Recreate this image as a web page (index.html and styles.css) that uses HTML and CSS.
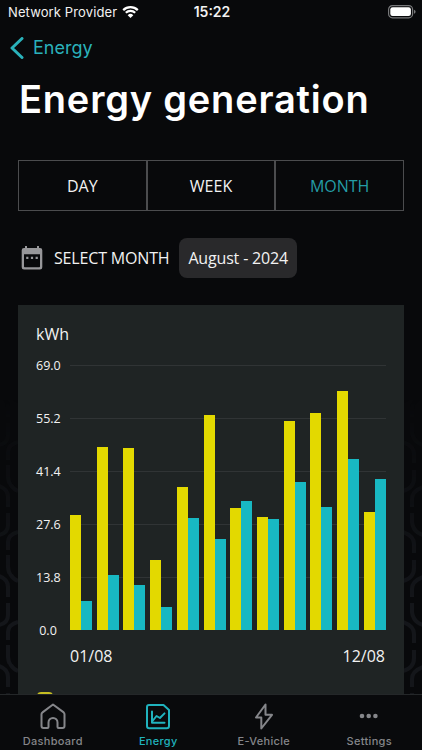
FILE: index.html
```html
<!DOCTYPE html>
<html lang="en">
<head>
    <meta charset="UTF-8">
    <title>Energy generation</title>
    <meta name="viewport" content="width=device-width, initial-scale=1.0">
    <link rel="stylesheet" href="styles.css">
</head>
<body>
    <svg class="pattern" width="422" height="750" viewBox="0 0 422 750">
        <defs>
            <pattern id="chain-left" x="0" y="484" width="18" height="90" patternUnits="userSpaceOnUse">
                <path d="M-1 2Q8 5 8 13V23M8 29V41Q8 49 -1 51M18 48Q8 51 8 58V66M8 71V83Q9 94 18 97M8 -7Q10 4 18 7"/>
            </pattern>
            <pattern id="chain-right" x="404" y="530" width="18" height="90" patternUnits="userSpaceOnUse">
                <path d="M-1 2Q10 6 10 14V23M10 30V38Q10 48 -1 51M19 47Q8 51 8 59V67M8 73V82Q9 92 19 95M8 -8Q9 2 19 5"/>
            </pattern>
        </defs>
        <rect x="0" y="400" width="18" height="300" fill="url(#chain-left)"/>
        <rect x="404" y="400" width="18" height="300" fill="url(#chain-right)"/>
    </svg>

    <div class="app">
        <header class="status">
            <div class="carrier">
                <span>Network Provider</span>
                <svg width="17" height="12" viewBox="0 0 17 12">
                    <path d="M1.2 4.1a10.4 10.4 0 0 1 14.6 0M3.8 6.8a6.7 6.7 0 0 1 9.4 0"/>
                    <path class="dot" d="M8.5 12 5.7 9.2a4 4 0 0 1 5.6 0z"/>
                </svg>
            </div>
            <span class="time">15:22</span>
            <svg class="battery" width="28" height="14" viewBox="0 0 28 14">
                <rect class="shell" x=".6" y=".6" width="24" height="12.2" rx="3.8"/>
                <rect x="2.3" y="2.3" width="20.6" height="8.8" rx="2.3"/>
                <path class="cap" d="M26 4.7q1.6.6 1.6 2t-1.6 2z"/>
            </svg>
        </header>

        <main class="content">
            <a class="back">
                <svg width="14" height="22" viewBox="0 0 14 22"><path d="M12 1.5 2 11l10 9.5"/></svg>
                <span>Energy</span>
            </a>
            <h1>Energy generation</h1>

            <div class="tabs">
                <div class="tab">DAY</div>
                <div class="tab">WEEK</div>
                <div class="tab active">MONTH</div>
            </div>

            <div class="picker">
                <svg width="22" height="24" viewBox="0 0 22 24">
                    <path fill-rule="evenodd" d="M4 0h2v2h10V0h2v2h1q2.3 0 2.3 2.2v17q0 2.2-2.3 2.2H3Q.7 23.4.7 21.2v-17Q.7 2 3 2h1zM3 8.3v12.2q0 .7.7.7h14.6q.7 0 .7-.7V8.3zM5.2 10.8h2.2V13H5.200zm4.700 0h2.200V13H9.900zm4.700 0h2.200V13h-2.200z"/>
                </svg>
                <span>SELECT MONTH</span>
                <div class="month">August - 2024</div>
            </div>

            <section class="card">
                <div class="unit">kWh</div>
                <div class="chart">
                    <div class="scale">
                        <span>69.0</span><span>55.2</span><span>41.4</span><span>27.6</span><span>13.8</span><span>0.0</span>
                    </div>
                    <div class="plot">
                        <div class="day"><i style="height:43.4%"></i><i style="height:10.9%"></i></div>
                        <div class="day"><i style="height:69.1%"></i><i style="height:20.9%"></i></div>
                        <div class="day"><i style="height:68.7%"></i><i style="height:16.8%"></i></div>
                        <div class="day"><i style="height:26.4%"></i><i style="height:8.7%"></i></div>
                        <div class="day"><i style="height:54.1%"></i><i style="height:42.4%"></i></div>
                        <div class="day"><i style="height:81.1%"></i><i style="height:34.3%"></i></div>
                        <div class="day"><i style="height:46%"></i><i style="height:48.8%"></i></div>
                        <div class="day"><i style="height:42.6%"></i><i style="height:41.9%"></i></div>
                        <div class="day"><i style="height:78.8%"></i><i style="height:55.8%"></i></div>
                        <div class="day"><i style="height:81.9%"></i><i style="height:46.5%"></i></div>
                        <div class="day"><i style="height:90.2%"></i><i style="height:64.5%"></i></div>
                        <div class="day"><i style="height:44.6%"></i><i style="height:56.9%"></i></div>
                    </div>
                </div>
                <div class="dates"><span>01/08</span><span>12/08</span></div>
                <div class="legend"></div>
            </section>
        </main>

        <nav class="nav">
            <div class="item">
                <svg width="28" height="28" viewBox="0 0 28 28"><path d="M3.5 10.4 14 2.5l10.7 7.9q.8.7.8 1.8V24q0 2-2 2h-4q-1 0-1-1v-4.5a4.500 4.500 0 0 0-9 0V25q0 1-1 1h-4q-2 0-2-2V12.200q0-1.100 1-1.800z"/></svg>
                <span>Dashboard</span>
            </div>
            <div class="item active">
                <svg width="28" height="28" viewBox="0 0 28 28"><path d="M5 3h14.5l5.5 5v16q0 2.300-2.300 2.300H5.300Q3 26.300 3 24V5q0-2 2-2zM8 9.500v11.300h12.500M8.500 19l4-5 3.400 2 4.600-4.600"/></svg>
                <span>Energy</span>
            </div>
            <div class="item">
                <svg width="28" height="28" viewBox="0 0 28 28"><path d="M15.500 2.500 6 15.500h5.300V26.500L22 12.800h-6.500z"/></svg>
                <span>E-Vehicle</span>
            </div>
            <div class="item">
                <svg class="dots" width="28" height="28" viewBox="0 0 28 28"><circle cx="7" cy="14" r="2.300"/><circle cx="13.700" cy="14" r="2.300"/><circle cx="20.400" cy="14" r="2.300"/></svg>
                <span>Settings</span>
            </div>
        </nav>
    </div>
</body>
</html>
```
FILE: styles.css
```css
* {
    box-sizing: border-box;
}
body {
    margin: 0;
    background: #08090b;
    color: #f2f2f2;
    font-family: "Open Sans", sans-serif;
    font-size: 16px;
}
svg {
    display: block;
    flex: none;
}
.pattern {
    position: absolute;
    top: 0;
    left: 0;
    -webkit-mask-image: linear-gradient(transparent 400px, #000 600px);
    mask-image: linear-gradient(transparent 400px, #000 600px);
}
.pattern path {
    fill: none;
    stroke: #14161a;
    stroke-width: 4;
}
.app {
    position: relative;
    display: flex;
    flex-direction: column;
    width: 422px;
    height: 750px;
    overflow: hidden;
}

/* status bar */
.status {
    display: grid;
    grid-template-columns: 1fr auto 1fr;
    align-items: center;
    height: 24px;
    padding: 0 6px 0 8px;
    font-family: Inter, sans-serif;
    font-size: 13px;
}
.carrier {
    display: flex;
    align-items: center;
    gap: 5px;
    letter-spacing: 0.12px;
    white-space: nowrap;
}
.carrier path {
    fill: none;
    stroke: #fff;
    stroke-width: 2.2;
}
.carrier .dot {
    fill: #fff;
    stroke: none;
}
.time {
    padding-bottom: 1px;
    font-size: 14px;
    font-weight: 600;
}
.battery {
    justify-self: end;
    margin-bottom: 1px;
    fill: #fff;
}
.battery .shell {
    fill: none;
    stroke: #77787a;
    stroke-width: 1.2;
}
.battery .cap {
    fill: #77787a;
}

.content {
    flex: 1;
    min-height: 0;
    padding: 0 18px;
    overflow: hidden;
}
.back {
    display: flex;
    align-items: center;
    gap: 9px;
    height: 47px;
    margin: 0 0 1px -8px;
    color: #2ab2bb;
    font-family: Inter, sans-serif;
    font-size: 18px;
}
.back path {
    fill: none;
    stroke: #2ab2bb;
    stroke-width: 3;
    stroke-linecap: round;
    stroke-linejoin: round;
}
h1 {
    height: 56px;
    margin: 0 0 32px 1px;
    color: #fff;
    font-family: Inter, sans-serif;
    font-size: 38px;
    font-weight: 600;
    line-height: 54px;
    letter-spacing: 0.8px;
    white-space: nowrap;
}

.tabs {
    display: flex;
    height: 51px;
}
.tab {
    display: flex;
    flex: 1;
    align-items: center;
    justify-content: center;
    border: 1px solid #4b4c4e;
}
.tab.active {
    color: #249da6;
}

.picker {
    display: flex;
    align-items: center;
    height: 40px;
    margin: 27px 0;
    letter-spacing: -0.17px;
}
.picker svg {
    margin-left: 3px;
    fill: #97979a;
}
.picker span {
    margin: 0 10px 0 11px;
}
.month {
    height: 40px;
    padding: 0 9px;
    border-radius: 8px;
    background: #29292b;
    line-height: 40px;
    white-space: nowrap;
}

.card {
    height: 430px;
    padding: 18px 18px 0;
    background: #1f2424;
}
.unit {
    height: 22px;
    line-height: 22px;
}
.chart {
    display: flex;
    margin-top: 20px;
}
.scale {
    display: flex;
    flex-direction: column;
    justify-content: space-between;
    width: 24px;
    height: 283px;
    margin: -8px 10px 0 0;
    font-size: 12.5px;
    line-height: 18px;
    text-align: center;
}
.plot {
    display: flex;
    flex: 1;
    justify-content: space-between;
    height: 265px;
    background: repeating-linear-gradient(#303435 0 1px, transparent 1px 53px);
}
.day {
    display: flex;
    align-items: flex-end;
}
.day i {
    width: 11px;
    background: #e3d900;
}
.day i + i {
    background: #18b8c2;
}
.dates {
    display: flex;
    justify-content: space-between;
    margin: 4px 1px 0 34px;
    line-height: 24px;
}
.legend {
    width: 16px;
    height: 16px;
    margin: 24px 0 0 1px;
    border-radius: 4px;
    background: #c5be22;
}

/* bottom navigation */
.nav {
    display: flex;
    height: 56px;
    border-top: 1px solid #242729;
    background: #090a0c;
}
.item {
    display: flex;
    flex: 1;
    flex-direction: column;
    align-items: center;
    padding-top: 7px;
    color: #85868a;
    font-family: Inter, sans-serif;
    font-size: 11px;
    font-weight: 500;
    line-height: 14px;
    letter-spacing: 0.3px;
}
.item span {
    margin-top: 4px;
}
.item path {
    fill: none;
    stroke: currentColor;
    stroke-width: 2;
    stroke-linejoin: round;
    stroke-linecap: round;
}
.item.active {
    color: #20b3be;
}
.dots {
    fill: currentColor;
}
```
